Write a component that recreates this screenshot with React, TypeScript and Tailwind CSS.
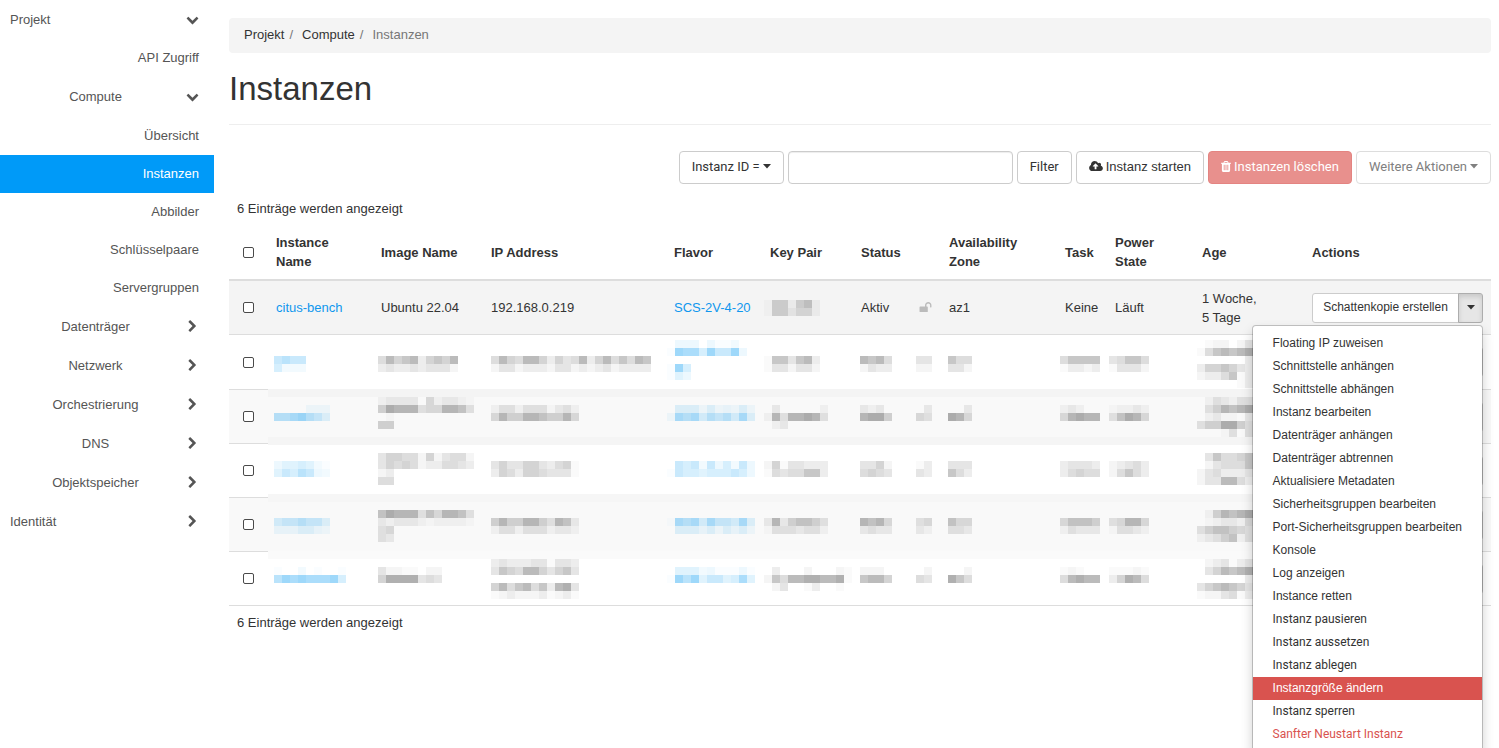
import React from "react";

const ICONS = {
  chevronDown: {
    box: "0 0 1792 1792",
    d: "M1683 808l-742 741q-19 19-45 19t-45-19l-742-741q-19-19-19-45.5t19-45.5l166-165q19-19 45-19t45 19l531 531 531-531q19-19 45-19t45 19l166 165q19 19 19 45.5t-19 45.5z",
  },
  chevronRight: {
    box: "0 0 1792 1792",
    d: "M1363 877l-742 742q-19 19-45 19t-45-19l-166-166q-19-19-19-45t19-45l531-531-531-531q-19-19-19-45t19-45l166-166q19-19 45-19t45 19l742 742q19 19 19 45t-19 45z",
  },
  cloudUpload: {
    box: "-64 128 1920 1536",
    d: "M1216 864q0-14-9-23l-352-352q-9-9-23-9t-23 9l-351 351q-10 12-10 24 0 14 9 23t23 9h224v352q0 13 9.5 22.5t22.5 9.5h192q13 0 22.5-9.5t9.5-22.5v-352h224q13 0 22.5-9.5t9.5-22.5zm640 288q0 159-112.5 271.5t-271.5 112.5h-1088q-185 0-316.5-131.5t-131.5-316.5q0-130 70-240t188-165q-2-30-2-43 0-212 150-362t362-150q156 0 285.5 87t188.5 231q71-62 166-62 106 0 181 75t75 181q0 76-41 138 130 31 213.5 135.5t83.5 238.5z",
  },
  trash: {
    box: "192 128 1408 1536",
    d: "M704 1376v-704q0-14-9-23t-23-9h-64q-14 0-23 9t-9 23v704q0 14 9 23t23 9h64q14 0 23-9t9-23zm256 0v-704q0-14-9-23t-23-9h-64q-14 0-23 9t-9 23v704q0 14 9 23t23 9h64q14 0 23-9t9-23zm256 0v-704q0-14-9-23t-23-9h-64q-14 0-23 9t-9 23v704q0 14 9 23t23 9h64q14 0 23-9t9-23zm-544-992h448l-48-117q-7-9-17-11h-317q-10 2-17 11zm928 32v64q0 14-9 23t-23 9h-96v948q0 83-47 143.5t-113 60.5h-832q-66 0-113-58.5t-47-141.5v-952h-96q-14 0-23-9t-9-23v-64q0-14 9-23t23-9h309l70-167q15-37 54-63t79-26h320q40 0 79 26t54 63l70 167h309q14 0 23 9t9 23z",
  },
  unlock: {
    box: "64 128 1664 1536",
    d: "M1728 576v256q0 26-19 45t-45 19h-64q-26 0-45-19t-19-45v-256q0-106-75-181t-181-75-181 75-75 181v192h96q40 0 68 28t28 68v576q0 40-28 68t-68 28h-960q-40 0-68-28t-28-68v-576q0-40 28-68t68-28h672v-192q0-185 131.5-316.5t316.5-131.5 316.5 131.5 131.5 316.5z",
  },
  caret: { box: "0 0 8 5", d: "M0 0h8l-4 4.5z" },
};

function Icon({ name, className }: { name: keyof typeof ICONS; className: string }) {
  return (
    <svg viewBox={ICONS[name].box} className={className} fill="currentColor" aria-hidden="true">
      <path d={ICONS[name].d} />
    </svg>
  );
}

/* ---------- Sidebar ---------- */

function Group({ label, open = false, top = false }: { label: string; open?: boolean; top?: boolean }) {
  return (
    <button type="button" aria-expanded={open} className="flex h-[39px] w-full items-center gap-[5px] pr-[15px] pb-px pl-[10px]">
      <span className={top ? "flex-1 text-left" : "flex-1 text-center"}>{label}</span>
      <Icon name={open ? "chevronDown" : "chevronRight"} className="size-[13px]" />
    </button>
  );
}

function Leaf({ label, active = false }: { label: string; active?: boolean }) {
  return (
    <a
      href="#"
      className={
        active
          ? "flex h-[38px] items-center justify-end bg-[#009af8] pr-[15px] pb-0.5 text-white"
          : "flex h-[38px] items-center justify-end pr-[15px] pb-0.5"
      }
    >
      {label}
    </a>
  );
}

function Sidebar() {
  return (
    <nav className="w-[214px] shrink-0 text-[#555]">
      <Group label="Projekt" open top />
      <Leaf label="API Zugriff" />
      <Group label="Compute" open />
      <div className="pt-px">
        <Leaf label="Übersicht" />
        <Leaf label="Instanzen" active />
        <Leaf label="Abbilder" />
        <Leaf label="Schlüsselpaare" />
        <Leaf label="Servergruppen" />
      </div>
      <Group label="Datenträger" />
      <Group label="Netzwerk" />
      <Group label="Orchestrierung" />
      <Group label="DNS" />
      <Group label="Objektspeicher" />
      <Group label="Identität" top />
    </nav>
  );
}

/* ---------- Pixelated cells ---------- */

const GREY = [0, 0.02, 0.04, 0.07, 0.1, 0.135, 0.17, 0.22, 0.265, 0.31];
const BLUE = [0, 0.02, 0.05, 0.07, 0.12, 0.16, 0.21, 0.27, 0.33, 0.38];

function Mosaic({ lines, top, blue = false }: { lines: string[]; top: number; blue?: boolean }) {
  const cols = Math.max(...lines.map((l) => l.length));
  const scale = blue ? BLUE : GREY;
  return (
    <svg width={cols * 8} height={48} shapeRendering="crispEdges" className="block overflow-visible" aria-hidden="true">
      {lines.flatMap((line, y) =>
        line.split("").map((c, x) =>
          c === "." ? null : (
            <rect
              key={`${x}-${y}`}
              x={x * 8}
              y={top + y * 8}
              width={8}
              height={8}
              fill={blue ? "#0099f2" : "#000"}
              fillOpacity={scale[Number(c)]}
            />
          )
        )
      )}
    </svg>
  );
}

const COLUMNS = [
  { key: "name", blue: true, pad: "pl-1.5" },
  { key: "image", blue: false, pad: "pl-[5px]" },
  { key: "ip", blue: false, pad: "pl-2" },
  { key: "flavor", blue: true, pad: "pl-px" },
  { key: "pair", blue: false, pad: "pl-0.5" },
  { key: "status", blue: false, pad: "pl-[7px]" },
  { key: "lock", blue: false, pad: "pl-[5px]" },
  { key: "zone", blue: false, pad: "pl-[7px]" },
  { key: "task", blue: false, pad: "pl-[3px]" },
  { key: "power", blue: false, pad: "pl-0.5" },
  { key: "age", blue: false, pad: "pl-[3px]" },
];

type MaskedRow = { top: number; row: string; cell: string; data: Record<string, string[]> };

const ROWS: MaskedRow[] = [
  {
    top: 5,
    row: "h-[55px] bg-white",
    cell: "border-t border-[#ddd]",
    data: {
      name: ["", "", "6766", "5222"],
      image: ["", "", "5867836768", "3433434442"],
      ip: ["", "", "58658863645836857587", "24423332442323423333"],
      flavor: [".333.3112", "1988596693", "", "195", "143"],
      pair: ["", "", "1774783", "1442442"],
      status: ["", "", "8785", "2433"],
      lock: ["", "", "44", "22"],
      zone: ["", "", "755", "442"],
      task: ["", "", "57777", "13323"],
      power: ["", "", "45775", "14442"],
      age: [".122.24", "1578789", "......3", "3667643", "2335713", ".....13"],
    },
  },
  {
    top: 8,
    row: "h-[54px] bg-[#f9f9f9]",
    cell: "bg-[linear-gradient(#f4f4f4_8px,transparent_8px,transparent_48px,#f5f5f5_48px)]",
    data: {
      name: ["", "....222", "7789764"],
      image: ["23333.523321", "698884558874", ".1", "66"],
      ip: ["", "24424441342", "58668876685"],
      flavor: ["", ".4442423242", "28785767584"],
      pair: ["", ".3.....2", "28488984", ".23"],
      status: ["", "323", "8996"],
      lock: ["", ".3", "54"],
      zone: ["", "..3", "985"],
      task: ["", "232", "58988"],
      power: ["", "12232", "47985"],
      age: [".243244", ".468789", ".2311.3", "4669964", "...14.4"],
    },
  },
  {
    top: 10,
    row: "h-[54px] bg-white",
    cell: "bg-[linear-gradient(#f5f5f5_2px,transparent_2px,transparent_51px,#f6f6f6_51px)]",
    data: {
      name: ["", "3445421", "4657632"],
      image: ["466552624552", "465652335543", "23", "55"],
      ip: ["", "46446643561", "36536654441"],
      flavor: ["", ".6562635263", "16554555653"],
      pair: ["", "26144333", "15455773"],
      status: ["", "4462", "5654"],
      lock: ["", "13", "43"],
      zone: ["", "444", "753"],
      task: ["", "34443", "35655"],
      power: ["", "23453", "25753"],
      age: [".475567", ".245557", "2453334", "2448853"],
    },
  },
  {
    top: 5,
    row: "h-[54px] bg-[#f9f9f9]",
    cell: "bg-[linear-gradient(#f6f6f6_5px,transparent_5px)]",
    data: {
      name: ["", "", "5667664", "3334432"],
      image: ["", "798884758874", "323332122221", "45", "43"],
      ip: ["", "", "68668864873", "24424442332"],
      flavor: ["", "", "18785866584", ".4443424342"],
      pair: ["", "", "38367764", "14443442"],
      status: ["", "", "8785", "3433"],
      lock: ["", "", "45", "32"],
      zone: ["", "", "755", "443"],
      task: ["", "", "57776", "24333"],
      power: ["", "", "45885", "14432"],
      age: ["", ".268789", ".123325", "4677654", "2346724"],
    },
  },
  {
    top: 8,
    row: "h-[54px] bg-white",
    cell: "bg-[linear-gradient(#fafafa_8px,transparent_8px)]",
    data: {
      name: ["", "1..2.1..1", "798988895"],
      image: ["", "42211.22", "69999454"],
      ip: ["34333441443", "47658864674", "", "68578573894", "12322231231"],
      flavor: ["", ".4442311131", "19794664584"],
      pair: ["", ".3...2...21", "27588998891", ".24..13..1"],
      status: ["", "222", "7886"],
      lock: ["", ".2", "54"],
      zone: ["", "..2", "975"],
      task: ["", "121", "58988"],
      power: ["", "11121", "36985"],
      age: [".234134", ".468789", "......3", "4678764", "1224513"],
    },
  },
];

/* ---------- Table ---------- */

function Check({ label }: { label: string }) {
  return (
    <input
      type="checkbox"
      aria-label={label}
      className="mx-auto block size-[11px] appearance-none rounded-[2px] border border-[#4a4a4a] bg-white"
    />
  );
}

const MENU = [
  { label: "Floating IP zuweisen", kind: "link" },
  { label: "Schnittstelle anhängen", kind: "link" },
  { label: "Schnittstelle abhängen", kind: "link" },
  { label: "Instanz bearbeiten", kind: "link" },
  { label: "Datenträger anhängen", kind: "link" },
  { label: "Datenträger abtrennen", kind: "link" },
  { label: "Aktualisiere Metadaten", kind: "link" },
  { label: "Sicherheitsgruppen bearbeiten", kind: "link" },
  { label: "Port-Sicherheitsgruppen bearbeiten", kind: "link" },
  { label: "Konsole", kind: "link" },
  { label: "Log anzeigen", kind: "link" },
  { label: "Instance retten", kind: "link" },
  { label: "Instanz pausieren", kind: "button" },
  { label: "Instanz aussetzen", kind: "button" },
  { label: "Instanz ablegen", kind: "button" },
  { label: "Instanzgröße ändern", kind: "active" },
  { label: "Instanz sperren", kind: "button" },
  { label: "Sanfter Neustart Instanz", kind: "danger" },
];

const MENU_STYLE: Record<string, string> = {
  link: "block px-5 py-[3px] text-[#333]",
  active: "block bg-[#d9534f] px-5 py-[3px] text-white",
  button: "block w-full px-5 py-[3px] text-left font-[Roboto,sans-serif] text-[#333]",
  danger: "block w-full px-5 py-[3px] text-left font-[Roboto,sans-serif] text-[#d9534f]",
};

function ActionMenu() {
  return (
    <ul className="absolute top-full right-0 z-10 mt-0.5 rounded-[4px] border border-black/20 bg-white bg-clip-padding pt-1.5 pb-[5px] text-[12px] leading-[17px] whitespace-nowrap shadow-[0_6px_12px_rgba(0,0,0,0.175)]">
      {MENU.map((item) => (
        <li key={item.label}>
          {item.kind === "link" || item.kind === "active" ? (
            <a href="#" className={MENU_STYLE[item.kind]}>
              {item.label}
            </a>
          ) : (
            <button type="button" className={MENU_STYLE[item.kind]}>
              {item.label}
            </button>
          )}
        </li>
      ))}
    </ul>
  );
}

function Actions({ label, open = false }: { label?: string; open?: boolean }) {
  return (
    <div className="relative flex h-[30px] text-[12px] leading-[17px]">
      <button
        type="button"
        aria-label={label ? undefined : "Aktion"}
        className="flex-1 rounded-l-[3px] border border-[#ccc] bg-white whitespace-nowrap"
      >
        {label}
      </button>
      <button
        type="button"
        aria-label="Aktionen"
        aria-expanded={open}
        className={
          open
            ? "-ml-px flex w-[25px] items-center justify-center rounded-r-[3px] border border-[#adadad] bg-[#e6e6e6] shadow-[inset_0_3px_5px_rgba(0,0,0,0.125)]"
            : "-ml-px flex w-[25px] items-center justify-center rounded-r-[3px] border border-[#ccc] bg-white"
        }
      >
        <Icon name="caret" className="h-[5px] w-[8px]" />
      </button>
      {open && <ActionMenu />}
    </div>
  );
}

function InstanceTable() {
  return (
    <table className="w-full table-fixed border-separate border-spacing-0 border-b border-[#ddd]">
      <colgroup>
        <col className="w-[39px]" />
        <col className="w-[105px]" />
        <col className="w-[110px]" />
        <col className="w-[183px]" />
        <col className="w-[96px]" />
        <col className="w-[91px]" />
        <col className="w-[58px]" />
        <col className="w-[30px]" />
        <col className="w-[116px]" />
        <col className="w-[50px]" />
        <col className="w-[87px]" />
        <col className="w-[110px]" />
        <col className="w-[187px]" />
      </colgroup>
      <thead>
        <tr className="text-left [&>th]:border-b-2 [&>th]:border-[#ddd] [&>th]:p-2">
          <th>
            <Check label="Alle auswählen" />
          </th>
          <th>Instance Name</th>
          <th>Image Name</th>
          <th>IP Address</th>
          <th>Flavor</th>
          <th>Key Pair</th>
          <th>Status</th>
          <th></th>
          <th>Availability Zone</th>
          <th>Task</th>
          <th>Power State</th>
          <th>Age</th>
          <th>Actions</th>
        </tr>
      </thead>
      <tbody>
        <tr className="h-[53px] bg-[#f4f4f4] [&>td]:px-2">
          <td>
            <Check label="citus-bench" />
          </td>
          <td>
            <a href="#" className="text-[#0f97ee]">
              citus-bench
            </a>
          </td>
          <td>Ubuntu 22.04</td>
          <td>192.168.0.219</td>
          <td className="whitespace-nowrap">
            <a href="#" className="text-[#0f97ee]">
              SCS-2V-4-20
            </a>
          </td>
          <td className="align-top">
            <div className="-ml-1.5">
              <Mosaic top={19} lines={["1662672", "1663552"]} />
            </div>
          </td>
          <td>Aktiv</td>
          <td>
            <Icon name="unlock" className="h-[11px] w-[13px] text-[#bbb]" />
          </td>
          <td>az1</td>
          <td>Keine</td>
          <td>Läuft</td>
          <td>
            1 Woche,
            <br />5 Tage
          </td>
          <td>
            <Actions label="Schattenkopie erstellen" open />
          </td>
        </tr>
        {ROWS.map((r, i) => (
          <tr key={i} className={r.row}>
            <td className="border-t border-[#ddd] px-2">
              <Check label={`Zeile ${i + 2}`} />
            </td>
            {COLUMNS.map((c) => (
              <td key={c.key} className={`align-top ${c.pad} ${r.cell}`}>
                <Mosaic lines={r.data[c.key]} top={r.top} blue={c.blue} />
              </td>
            ))}
            <td className="border-t border-[#ddd] px-2">
              <Actions />
            </td>
          </tr>
        ))}
      </tbody>
    </table>
  );
}

/* ---------- Page ---------- */

const BTN = "flex h-[33px] items-center gap-[3px] rounded-[4px] border px-3 pb-0.5 whitespace-nowrap";

function Toolbar() {
  return (
    <div className="flex items-center justify-end gap-1">
      <button type="button" aria-haspopup="menu" className={`${BTN} border-[#ccc] bg-white font-[Roboto,sans-serif]`}>
        Instanz ID = <Icon name="caret" className="h-[5px] w-[8px]" />
      </button>
      <input
        type="text"
        aria-label="Filter"
        className="h-[33px] w-[225px] rounded-[4px] border border-[#ccc] bg-white px-3 shadow-[inset_0_1px_1px_rgba(0,0,0,0.075)]"
      />
      <button type="button" className={`${BTN} border-[#ccc] bg-white font-[Roboto,sans-serif]`}>
        Filter
      </button>
      <a href="#" className={`${BTN} border-[#ccc] bg-white`}>
        <Icon name="cloudUpload" className="h-[11px] w-[14px]" />
        Instanz starten
      </a>
      <button
        type="button"
        disabled
        className={`${BTN} border-[#e48481] bg-[#e8908d] font-[Roboto,sans-serif] text-white`}
      >
        <Icon name="trash" className="h-[11px] w-[10px]" />
        Instanzen löschen
      </button>
      <button
        type="button"
        disabled
        className={`${BTN} border-[#ddd] bg-white font-[Roboto,sans-serif] text-[#808080]`}
      >
        Weitere Aktionen <Icon name="caret" className="h-[5px] w-[8px]" />
      </button>
    </div>
  );
}

export default function App() {
  return (
    <div className="flex h-screen overflow-hidden bg-white font-['Liberation_Sans',Arial,sans-serif] text-[13px] leading-[19px] text-[#333]">
      <Sidebar />
      <main className="min-w-0 flex-1 pt-[18px] pr-2 pl-[15px]">
        <ol className="flex rounded-[4px] bg-[#f4f4f4] px-[15px] pt-[7px] pb-[9px]">
          <li>
            <a href="#">Projekt</a>
            <span className="px-[5px] text-[#777]">/</span>
          </li>
          <li className="pl-1">
            <a href="#">Compute</a>
            <span className="px-[5px] text-[#777]">/</span>
          </li>
          <li className="pl-1 text-[#777]">Instanzen</li>
        </ol>
        <h1 className="mb-[26px] border-b border-[#eee] pt-[18px] pb-[17px] text-[33px] leading-[36px]">Instanzen</h1>
        <Toolbar />
        <p className="px-2 pt-[15px] pb-[7px]">6 Einträge werden angezeigt</p>
        <InstanceTable />
        <p className="px-2 py-[7px]">6 Einträge werden angezeigt</p>
      </main>
    </div>
  );
}
